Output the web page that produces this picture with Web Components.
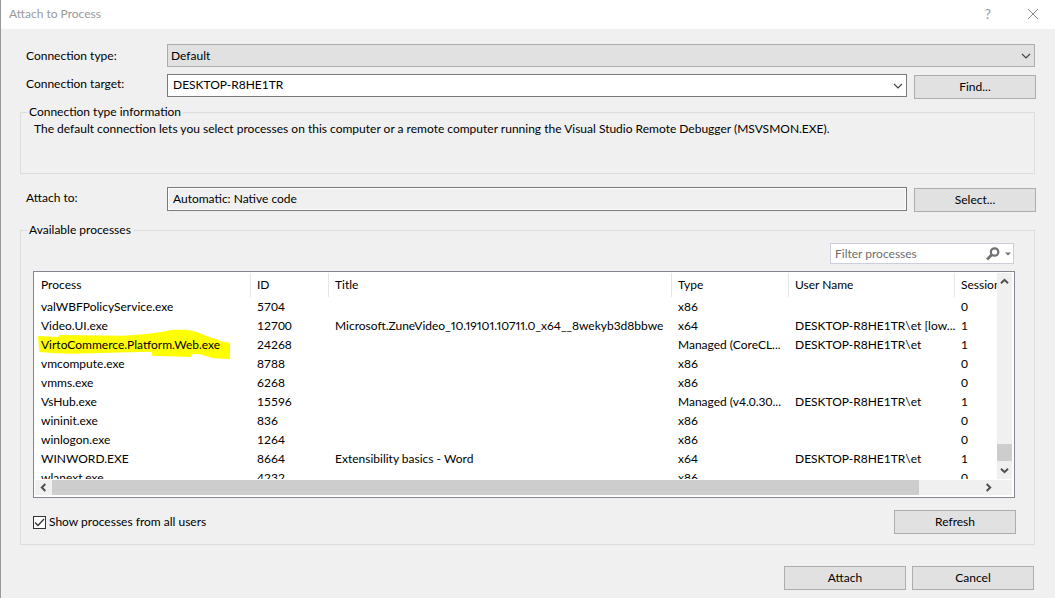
<!DOCTYPE html>
<html lang="en">
<head>
<meta charset="utf-8">
<title>Attach to Process</title>
<style>
html, body { margin: 0; height: 100%; }
body { font: 12px/16px Lato, "Open Sans", sans-serif; color: #000; background: #f0f0f0; }
</style>
</head>
<body>
<attach-dialog></attach-dialog>
<script>
const define = (name, html, setup) => {
  const template = document.createElement('template');
  template.innerHTML = html;
  customElements.define(name, class extends HTMLElement {
    constructor() {
      super();
      this.attachShadow({ mode: 'open' }).append(template.content.cloneNode(true));
    }
    connectedCallback() { if (setup) setup(this, this.shadowRoot); }
  });
};

define('title-bar', `
<style>
:host { display: flex; align-items: center; justify-content: space-between; height: 29px; background: #fff; color: #999; padding: 0 13px 2px 8px; box-sizing: border-box; }
h1 { font: inherit; margin: 0; }
div { display: flex; gap: 27px; }
button { display: flex; align-items: center; justify-content: center; font: inherit; color: inherit; background: none; border: 0; padding: 0; width: 18px; height: 18px; }
button:first-child { font-size: 14px; }
</style>
<h1><slot></slot></h1>
<div>
  <button type="button" aria-label="Help">?</button>
  <button type="button" aria-label="Close"><svg width="12" height="12" viewBox="0 0 12 12" fill="none" stroke="#888"><path d="M1 1 11 11M11 1 1 11"/></svg></button>
</div>`);

define('push-button', `
<style>
:host { display: block; width: 122px; }
button { display: block; width: 100%; height: 24px; box-sizing: border-box; padding: 0; font: inherit; color: inherit; background: #e1e1e1; border: 1px solid #adadad; }
</style>
<button type="button"><slot></slot></button>`);

const rowStyle = `
:host { display: grid; grid-template-columns: 147px minmax(0, 1fr) auto; align-items: start; }
label { padding: 4px 0 0 6px; }
.box { position: relative; }
select, input { display: block; width: 100%; height: 23px; box-sizing: border-box; margin: 0; font: inherit; color: inherit; border-radius: 0; appearance: none; outline: 0; }
svg { position: absolute; right: 4px; top: 8px; pointer-events: none; }
::slotted(push-button) { margin: 1px 0 0 7px; }`;
const chevron = `<svg width="10" height="8" viewBox="0 0 10 8" fill="none" stroke="#444" stroke-width="1.2"><path d="M1 2 5 6 9 2"/></svg>`;

define('type-field', `
<style>${rowStyle}
select { background: #e1e1e1; border: 1px solid #adadad; padding: 0 20px 0 3px; }
.box { margin-right: 1px; }
</style>
<label for="f">Connection type:</label>
<div class="box"><select id="f"><option>Default</option></select>${chevron}</div>`);

define('target-field', `
<style>${rowStyle}
input { background: #fff; border: 1px solid #7a7a7a; padding: 0 20px 2px 5px; }
label { padding-top: 2px; }
</style>
<label for="f">Connection target:</label>
<div class="box"><input id="f" type="text" value="DESKTOP-R8HE1TR">${chevron}</div>
<slot></slot>`);

define('code-field', `
<style>${rowStyle}
input { height: 24px; background: #f0f0f0; border: 1px solid #7a7a7a; box-shadow: inset 0 0 0 1px #fff; padding: 0 5px 2px; }
label { padding-top: 3px; }
</style>
<label for="f">Attach to:</label>
<div class="box"><input id="f" type="text" readonly value="Automatic: Native code"></div>
<slot></slot>`);

define('group-box', `
<style>
:host { display: flex; margin-right: 1px; }
fieldset { flex: 1; min-width: 0; margin: 0; padding: 0 19px 10px 12px; border: 1px solid #dcdcdc; display: flex; flex-direction: column; }
legend { padding: 0 2px; margin-left: -6px; }
</style>
<fieldset><legend></legend><slot></slot></fieldset>`,
(host, root) => { root.querySelector('legend').textContent = host.getAttribute('caption'); });

define('filter-box', `
<style>
:host { display: flex; align-items: center; align-self: flex-end; width: 184px; height: 21px; box-sizing: border-box; background: #fff; border: 1px solid #cccedb; margin-right: 1px; }
input { flex: 1; min-width: 0; border: 0; outline: 0; background: none; font: inherit; padding: 0 0 0 4px; }
input::placeholder { color: #6d6d6d; opacity: 1; }
button { display: flex; border: 0; background: none; padding: 0; }
.more { margin: 0 2px 0 5px; }
</style>
<input type="text" placeholder="Filter processes" aria-label="Filter processes">
<button type="button" aria-label="Search"><svg width="14" height="14" viewBox="0 0 14 14" fill="none" stroke="#717171"><circle cx="8.6" cy="5" r="3.7" stroke-width="2.2"/><path d="M5.8 7.8 1 12.4" stroke-width="2.8"/></svg></button>
<button type="button" class="more" aria-label="Search options"><svg width="6" height="4" viewBox="0 0 6 4"><path d="M0 0.5H6L3 3.5Z" fill="#717171"/></svg></button>`);

const arrow = `<svg width="9" height="9" viewBox="0 0 9 9" fill="none" stroke="#505050" stroke-width="2"><path d="M1 6.3 4.5 2.8 8 6.3"/></svg>`;
define('scroll-bar', `
<style>
:host { display: flex; background: #f0f0f0; min-width: 0; min-height: 0; }
:host([vertical]) { flex-direction: column; }
button { flex: none; display: flex; align-items: center; justify-content: center; width: 17px; height: 15px; border: 0; padding: 0; background: none; }
:host([vertical]) button { width: 15px; height: 17px; }
.before { flex: var(--before, 0) 0 0px; }
.thumb { flex: var(--thumb, 1) 0 0px; background: #cdcdcd; }
.after { flex: var(--after, 0) 0 0px; }
svg { transform: rotate(-90deg); }
button:last-child svg { transform: rotate(90deg); }
:host([vertical]) svg { transform: none; }
:host([vertical]) button:last-child svg { transform: rotate(180deg); }
</style>
<button type="button" aria-label="Scroll back">${arrow}</button>
<div class="before"></div><div class="thumb"></div><div class="after"></div>
<button type="button" aria-label="Scroll forward">${arrow}</button>`);

const processes = [
  ['valWBFPolicyService.exe', '5704', '', 'x86', '', '0'],
  ['Video.UI.exe', '12700', 'Microsoft.ZuneVideo_10.19101.10711.0_x64__8wekyb3d8bbwe', 'x64', 'DESKTOP-R8HE1TR\\et [low...', '1'],
  ['VirtoCommerce.Platform.Web.exe', '24268', '', 'Managed (CoreCL...', 'DESKTOP-R8HE1TR\\et', '1'],
  ['vmcompute.exe', '8788', '', 'x86', '', '0'],
  ['vmms.exe', '6268', '', 'x86', '', '0'],
  ['VsHub.exe', '15596', '', 'Managed (v4.0.30...', 'DESKTOP-R8HE1TR\\et', '1'],
  ['wininit.exe', '836', '', 'x86', '', '0'],
  ['winlogon.exe', '1264', '', 'x86', '', '0'],
  ['WINWORD.EXE', '8664', 'Extensibility basics - Word', 'x64', 'DESKTOP-R8HE1TR\\et', '1'],
  ['wlanext.exe', '4232', '', 'x86', '', '0'],
];
const marker = `<svg width="192" height="30" viewBox="114 327 576 90"><path fill="#ff0" d="M114 348 175 351 178 345 370 347 440 342 490 335 515 329 560 329 590 336 625 350 650 358 668 365 690 368 690 417 640 415 600 403 575 402 575 411 457 407 455 395 330 398 225 401 165 400 118 396Z"/></svg>`;

define('process-list', `
<style>
:host { flex: 1; min-height: 120px; display: grid; grid-template-columns: minmax(0, 1fr) 15px; grid-template-rows: minmax(0, 1fr) 15px; row-gap: 1px; box-sizing: border-box; background: #fff; border: 1px solid #828790; padding: 1px 2px 2px 1px; }
.view { overflow: hidden; min-height: 0; contain: size; }
.corner { background: #f0f0f0; }
table { width: 100%; border-collapse: separate; border-spacing: 0; table-layout: fixed; }
th, td { padding: 0 0 0 6px; text-align: left; font-weight: normal; white-space: nowrap; height: 19px; box-sizing: border-box; position: relative; }
th { height: 24px; border-right: 1px solid #e5e5e5; }
th:last-child { border: 0; }
td:nth-child(3) { font-variant-numeric: proportional-nums; }
span { position: relative; }
svg { position: absolute; left: 3px; top: -6px; }
.name { width: 216px; } .id { width: 78px; } .type { width: 117px; } .user { width: 166px; } .session { width: 42px; }
.bottom { --thumb: 867; --after: 61; }
.side { --before: 154; --thumb: 17; --after: 1; }
</style>
<div class="view"><table>
<colgroup><col class="name"><col class="id"><col><col class="type"><col class="user"><col class="session"></colgroup>
<thead><tr><th>Process</th><th>ID</th><th>Title</th><th>Type</th><th>User Name</th><th>Session</th></tr></thead>
<tbody>${processes.map((p, i) => `<tr>${p.map((c, j) => `<td>${i === 2 && j === 0 ? marker : ''}<span>${c}</span></td>`).join('')}</tr>`).join('')}</tbody>
</table></div>
<scroll-bar vertical class="side"></scroll-bar>
<scroll-bar class="bottom"></scroll-bar>
<div class="corner"></div>`);

define('check-option', `
<style>
:host { display: block; }
label { display: flex; align-items: center; gap: 3px; }
input { appearance: none; width: 13px; height: 13px; box-sizing: border-box; margin: 0; border: 1px solid #333; background: #fff; }
.mark { position: relative; display: flex; }
svg { position: absolute; left: 1px; top: 2px; pointer-events: none; display: none; }
input:checked + svg { display: block; }
</style>
<label><span class="mark"><input type="checkbox" checked><svg width="11" height="9" viewBox="0 0 11 9" fill="none" stroke="#333" stroke-width="1.3"><path d="M1 4.5 4 7.5 10 1"/></svg></span><slot></slot></label>`);

define('attach-dialog', `
<style>
:host { display: flex; flex-direction: column; min-height: 100vh; box-sizing: border-box; border-left: 1px solid #999; background: #f0f0f0; }
main { flex: 1; display: flex; flex-direction: column; padding: 15px 19px 8px; }
target-field { margin-top: 7px; }
.info { margin-top: 5px; min-height: 70px; }
.info p { margin: 1px 0 0 1px; }
code-field { margin-top: 13px; }
.available { flex: 1; margin-top: 10px; }
filter-box { margin-top: 5px; }
process-list { margin-top: 7px; }
.under { display: flex; align-items: center; justify-content: space-between; margin: 12px -1px 0 0; }
footer { display: flex; justify-content: flex-end; gap: 6px; margin: 21px 2px 0 0; }
</style>
<title-bar>Attach to Process</title-bar>
<main>
  <type-field></type-field>
  <target-field><push-button>Find...</push-button></target-field>
  <group-box class="info" caption="Connection type information"><p>The default connection lets you select processes on this computer or a remote computer running the Visual Studio Remote Debugger (MSVSMON.EXE).</p></group-box>
  <code-field><push-button>Select...</push-button></code-field>
  <group-box class="available" caption="Available processes">
    <filter-box></filter-box>
    <process-list></process-list>
    <div class="under"><check-option>Show processes from all users</check-option><push-button>Refresh</push-button></div>
  </group-box>
  <footer><push-button>Attach</push-button><push-button>Cancel</push-button></footer>
</main>`);
</script>
</body>
</html>
